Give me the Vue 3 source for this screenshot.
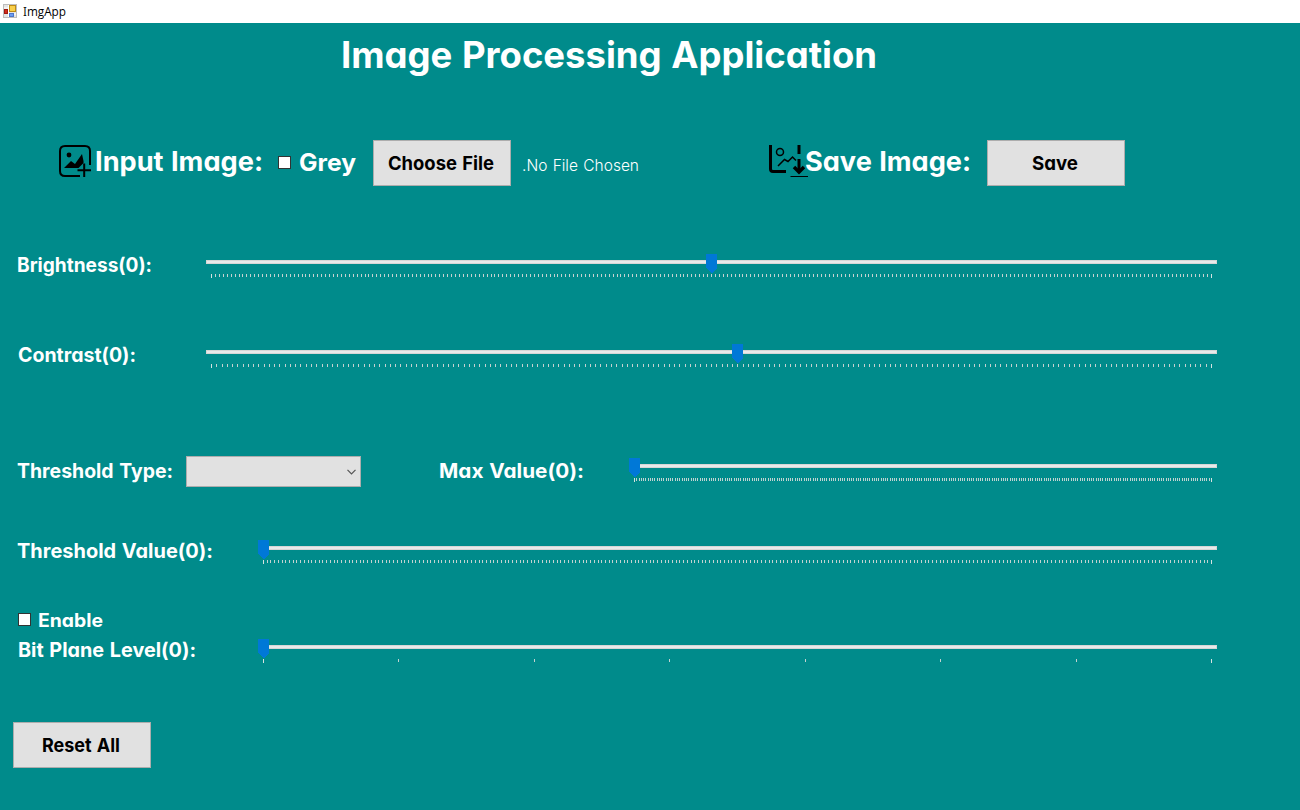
<script setup>
import { h } from 'vue'

// Single-line caption with a fixed advance width
const Caption = (p) =>
  h('svg', { class: 'caption', width: p.w, height: p.size, overflow: 'visible' }, [
    h('text', {
      x: 0,
      y: p.size,
      'font-size': p.size,
      textLength: p.w,
      lengthAdjust: 'spacingAndGlyphs',
      fill: 'currentColor',
    }, p.text),
  ])
Caption.props = ['text', 'w', 'size']

// Track bar: 5px inset between the track edge and the first and last tick
const TrackBar = (p) => {
  const span = p.w - 11
  const ticks = Array.from({ length: p.steps + 1 }, (_, i) => {
    const x = 5 + Math.round((i * span) / p.steps)
    const end = i === 0 || i === p.steps
    return h('rect', { x, y: 20, width: 1, height: end ? 4 : 3, fill: end ? '#d5e2e1' : '#c3d2d1' })
  })
  const t = Math.round((p.value * span) / p.steps)
  return h('svg', { class: 'track', width: p.w, height: 24, 'shape-rendering': 'crispEdges' }, [
    h('rect', { x: 0, y: 6, width: p.w, height: 4, fill: '#d6d6d6' }),
    h('rect', { x: 1, y: 7, width: p.w - 2, height: 2, fill: '#e7eaea' }),
    ...ticks,
    h('path', { d: `M${t} 0h11v14l-5 5h-1l-5-5z`, fill: '#0078d7' }),
  ])
}
TrackBar.props = ['w', 'steps', 'value']
</script>

<template>
  <div class="window">
    <header class="titlebar">
      <svg width="14" height="14" viewBox="0 0 14 14">
        <rect x=".5" y=".5" width="13" height="13" fill="#e4e4e4" stroke="#bdbdbd" />
        <path d="M1 4h5M5 10h8M5.500 1v12" stroke="#fff" />
        <rect x="6.500" y="1.500" width="6" height="6" fill="#f8cf4b" stroke="#bd8b16" />
        <rect x="1.500" y="5.500" width="3" height="4" fill="#d22b1d" stroke="#a11910" />
        <rect x="6.500" y="9.500" width="4" height="3" fill="#6c9df0" stroke="#4b75cb" />
      </svg>
      <Caption class="app-name" text="ImgApp" :w="43" :size="12" />
    </header>

    <main class="form">
      <h1><Caption text="Image Processing Application" :w="536" :size="37" /></h1>

      <div class="files">
        <svg class="icon-in" width="32" height="32" viewBox="0 0 32 32" fill="none" stroke="#000" stroke-width="2">
          <path d="M31 20V6Q31 1 26 1H6Q1 1 1 6v20q0 5 5 5h15" />
          <circle cx="10" cy="10" r="2.400" fill="#000" stroke="none" />
          <path d="M5 23l7-7 4 3 7-10 1.500 7v2l-5 5z" fill="#000" stroke="none" />
          <path d="M18.500 25.200H32M25.200 18.500V32" />
        </svg>
        <Caption class="input-label" text="Input Image:" :w="168" :size="27" />
        <span class="box grey-box"></span>
        <Caption class="grey-label" text="Grey" :w="57" :size="24" />
        <button class="choose"><Caption text="Choose File" :w="106" :size="19" /></button>
        <Caption class="status" text=".No File Chosen" :w="117" :size="16" />
        <svg class="icon-out" width="40" height="34" viewBox="0 0 40 34" fill="none" stroke="#000">
          <path d="M1.500 0v24q0 2.500 2.500 2.500h13" stroke-width="3" />
          <circle cx="11" cy="7" r="3.500" stroke-width="1.500" />
          <path d="M9 21l6.500-6.500 3.500 2 4.500-4.500 3.500 3.500" stroke-width="1.500" />
          <path d="M30 0v9M30 14v12" stroke-width="3" />
          <path d="M25 22l5 5 5-5" stroke-width="3.500" />
          <path d="M21.500 31.500h17.500" />
        </svg>
        <Caption class="save-label" text="Save Image:" :w="166" :size="27" />
        <button class="save"><Caption text="Save" :w="46" :size="19" /></button>
      </div>

      <div class="row brightness">
        <Caption text="Brightness(0):" :w="135" :size="20" />
        <TrackBar :w="1011" :steps="254" :value="127" />
      </div>
      <div class="row contrast">
        <Caption text="Contrast(0):" :w="118" :size="20" />
        <TrackBar :w="1011" :steps="190" :value="100" />
      </div>
      <div class="row threshold">
        <Caption text="Threshold Type:" :w="156" :size="20" />
        <div class="select">
          <svg width="9" height="6" viewBox="0 0 9 6" fill="none" stroke="#555" stroke-width="1.200"><path d="M.5.800l4 4 4-4" /></svg>
        </div>
        <Caption class="max-label" text="Max Value(0):" :w="145" :size="20" />
        <TrackBar :w="588" :steps="255" :value="0" />
      </div>
      <div class="row value">
        <Caption text="Threshold Value(0):" :w="196" :size="20" />
        <TrackBar :w="959" :steps="255" :value="0" />
      </div>
      <div class="enable">
        <span class="box"></span>
        <Caption text="Enable" :w="65" :size="18.500" />
      </div>
      <div class="row bits">
        <Caption text="Bit Plane Level(0):" :w="178" :size="20" />
        <TrackBar :w="959" :steps="7" :value="0" />
      </div>
      <button class="reset"><Caption text="Reset All" :w="78" :size="19" /></button>
    </main>
  </div>
</template>

<style>
html, body { margin: 0; background: #008b8b; overflow: hidden; }
</style>

<style scoped>
.window {
  width: 1300px;
  height: 810px;
  overflow: hidden;
  background: #008b8b;
  color: #fff;
  font-family: "Century Gothic", Inter, Lato, sans-serif;
  font-weight: 650;
  font-feature-settings: "cv11", "ss03";
  word-spacing: 0.06em;
}
svg { display: block; flex: none; }
.titlebar { display: flex; height: 23px; box-sizing: border-box; padding: 4px 0 0 3px; background: #fff; color: #000; }
.app-name { margin-left: 6px; font-family: "Open Sans", sans-serif; font-weight: 400; }
.form { display: flow-root; }
h1 { margin: 8px 0 0 341px; font-size: inherit; font-weight: inherit; }
.files { display: flex; align-items: flex-start; height: 46px; margin-top: 72px; padding-left: 59px; }
.icon-in { margin-top: 5px; }
.input-label { margin: 4px 0 0 4px; }
.box { box-sizing: border-box; flex: none; width: 13px; height: 13px; border: 1px solid #333; background: #fff; }
.grey-box { margin: 16px 0 0 15px; }
.grey-label { margin: 7px 0 0 8px; }
button {
  display: flex;
  flex: none;
  justify-content: center;
  box-sizing: border-box;
  width: 138px;
  height: 46px;
  margin: 0;
  padding: 10px 0 0;
  border: 1px solid #adadad;
  border-radius: 0;
  background: #e1e1e1;
  color: #000;
  font: inherit;
  font-feature-settings: inherit;
  word-spacing: inherit;
  align-items: flex-start;
}
.choose { margin-left: 17px; }
.choose > .caption { margin-left: -2px; }
.status { margin: 15px 0 0 11px; font-weight: 300; }
.icon-out { margin: 5px 0 0 130px; }
.save-label { margin: 4px 0 0 -4px; }
.save { margin-left: 16px; padding-right: 2px; }
.row { display: flex; height: 24px; align-items: flex-start; padding-left: 18px; }
.row > .caption { margin-top: -2px; }
.row > .track { margin-left: auto; margin-right: 83px; }
.brightness { margin-top: 68px; padding-left: 17px; }
.contrast { margin-top: 66px; }
.threshold { margin-top: 90px; padding-left: 17px; }
.threshold > .caption { margin-top: 0; }
.select {
  display: flex;
  justify-content: flex-end;
  align-items: center;
  box-sizing: border-box;
  width: 175px;
  height: 31px;
  margin: -2px 0 0 13px;
  padding-right: 4px;
  border: 1px solid #adadad;
  background: #e1e1e1;
}
.row > .max-label { margin-left: 78px; }
.value { margin-top: 58px; padding-left: 17px; }
.enable { display: flex; height: 13px; margin: 49px 0 0 18px; }
.enable > .caption { margin: -5px 0 0 7px; }
.bits { margin-top: 13px; }
.reset { margin: 59px 0 0 13px; padding-right: 2px; }
</style>
